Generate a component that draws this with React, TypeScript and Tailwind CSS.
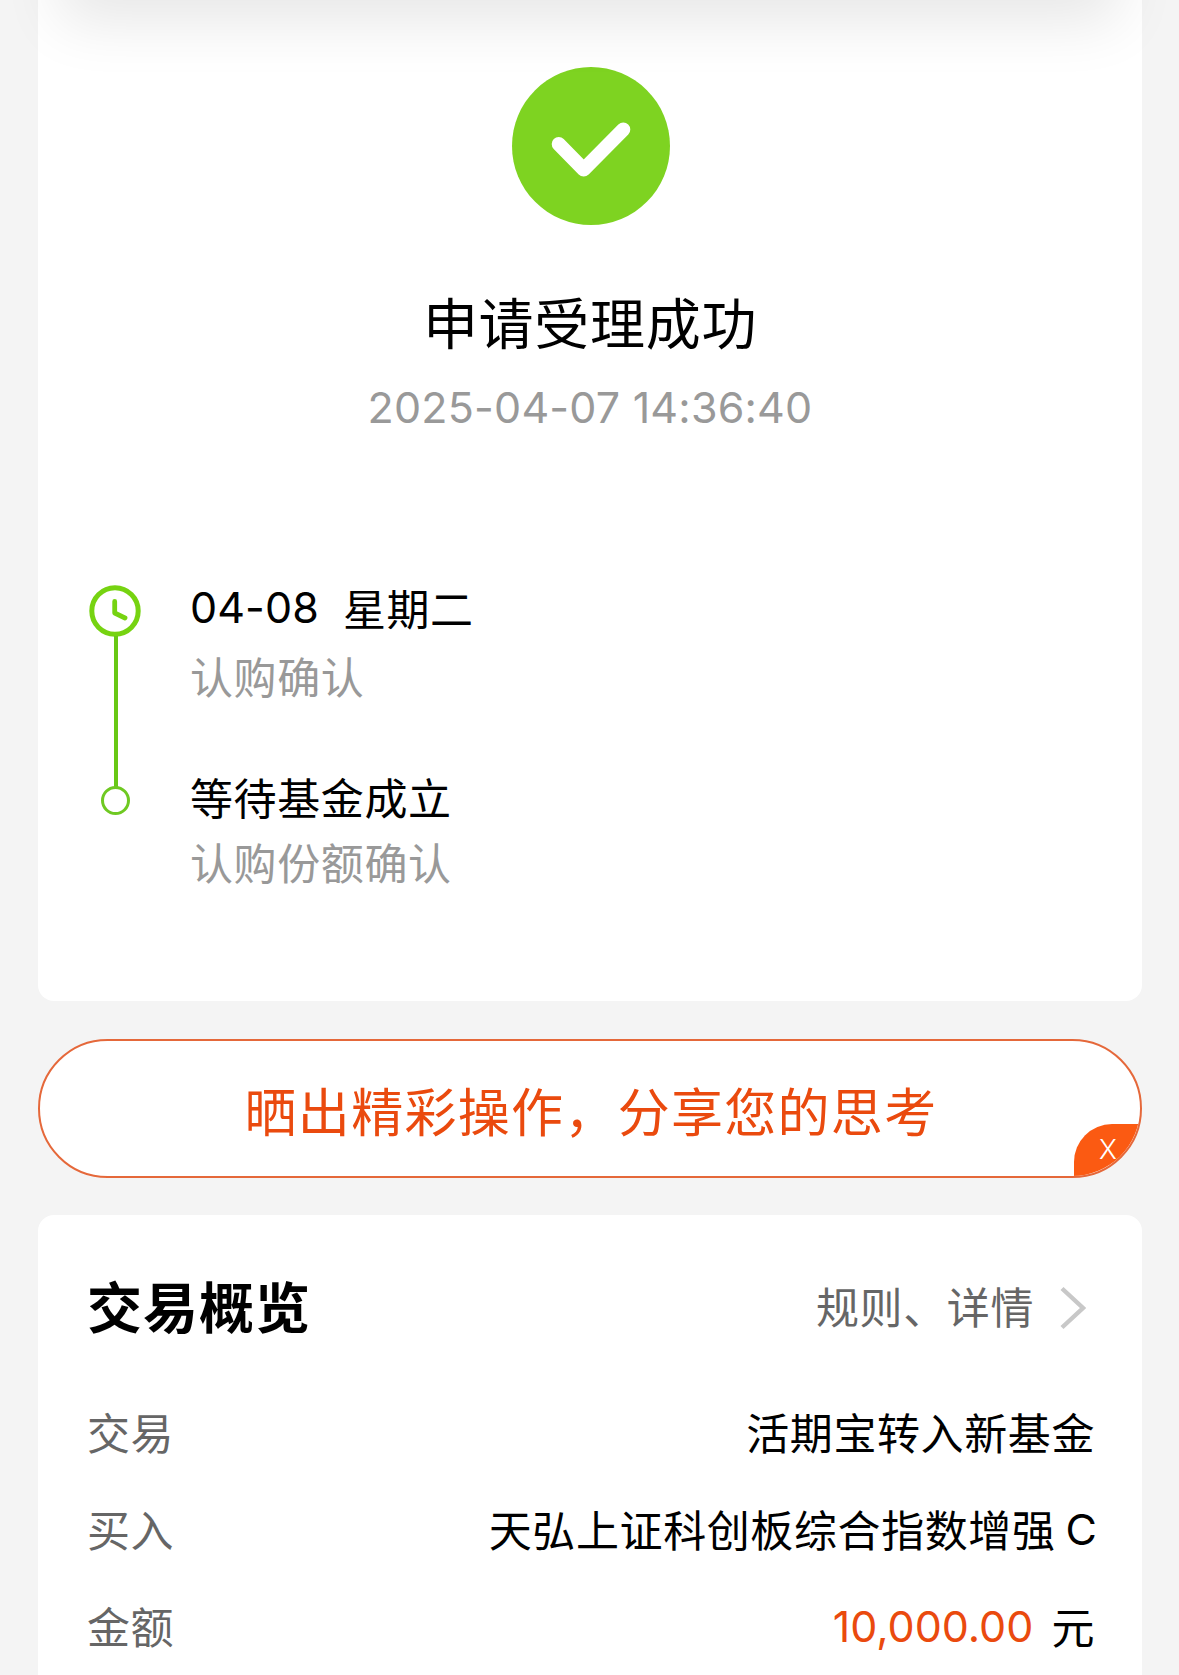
import type { ReactNode } from 'react';

function SuccessIcon() {
  return (
    <svg width="158" height="158" viewBox="0 0 158 158" fill="none" className="ml-[2px]">
      <circle cx="79" cy="79" r="79" fill="#7ed321" />
      <path d="M46.7 77 L71.7 102.5 L111.3 62.5" stroke="#fff" strokeWidth="14" strokeLinecap="round" strokeLinejoin="round" />
    </svg>
  );
}

function ClockIcon() {
  return (
    <svg width="52" height="52" viewBox="0 0 52 52" fill="none" className="mr-[2px] shrink-0">
      <circle cx="26" cy="26" r="23.2" stroke="#76d311" strokeWidth="5" />
      <path d="M25.7 16.5 V28 L36 33" stroke="#76d311" strokeWidth="4.8" strokeLinecap="round" strokeLinejoin="round" />
    </svg>
  );
}

function Chevron() {
  return (
    <svg width="26" height="44" viewBox="0 0 26 44" fill="none">
      <path d="M2 2.5 L23 22 L2 41.5" stroke="#c8c8c8" strokeWidth="4.4" />
    </svg>
  );
}

function Row({ label, children }: { label: string; children: ReactNode }) {
  return (
    <div className="flex h-[97px] items-center justify-between">
      <span className="text-[#666]">{label}</span>
      <span className="flex items-start text-black">{children}</span>
    </div>
  );
}

export default function App() {
  return (
    <div className="relative h-[1675px] w-full overflow-hidden bg-[#f4f4f4] px-[38px] font-['Inter','Noto_Sans_CJK_SC',sans-serif] text-[43px] leading-[60px] tracking-[0.6px]">
      {/* Shadow cast by the bar above */}
      <div className="pointer-events-none absolute -top-[100px] right-[60px] left-[60px] z-10 h-[100px] shadow-[0_22px_60px_rgba(0,0,0,0.098)]" />

      {/* Result */}
      <section className="h-[1001px] w-[1104px] rounded-b-[16px] bg-white px-[50px] pt-[67px]">
        <div className="flex flex-col items-center">
          <SuccessIcon />
          <h1 className="mt-[63px] text-[55px] leading-[72px] tracking-[0.7px] text-black">申请受理成功</h1>
          <p className="mt-[17px] tracking-[0.2px] text-[#999]">2025-04-07 14:36:40</p>
        </div>

        {/* Timeline */}
        <div className="mt-[140px] flex">
          <div className="mt-[8px] flex w-[55px] flex-col items-center">
            <ClockIcon />
            <div className="-mt-px h-[151px] w-1 bg-[#68c815]" />
            <div className="-mt-px size-[29px] rounded-full border-[3px] border-[#6fc922]" />
          </div>
          <div className="ml-[47px] pt-[3px]">
            <p className="flex h-[60px] items-start text-black">
              <span className="leading-[54px] tracking-[0.1px]">04-08</span>
              <span className="ml-[24px]">星期二</span>
            </p>
            <p className="mt-[8px] text-[#999]">认购确认</p>
            <p className="mt-[61px] text-black">等待基金成立</p>
            <p className="mt-[5px] text-[#999]">认购份额确认</p>
          </div>
        </div>
      </section>

      {/* Share button */}
      <div className="relative mt-[38px] flex h-[139px] w-[1104px] items-center justify-center overflow-hidden rounded-full border-2 border-[#e5683a] bg-white">
        <span className="mt-[11px] ml-[2px] text-[52px] tracking-[1.3px] text-[#ea4a0e]">晒出精彩操作，分享您的思考</span>
        <button className="absolute -right-[2px] -bottom-[2px] h-[54px] w-[68px] rounded-tl-[38px] bg-[#fb5a12] pb-[2px] text-[27px] leading-[50px] font-light tracking-normal text-white">
          X
        </button>
      </div>

      {/* Overview */}
      <section className="mt-[37px] h-[480px] w-[1104px] rounded-t-[16px] bg-white pt-[63px] pr-[47px] pl-[49px]">
        <div className="flex h-[60px] items-center justify-between">
          <h2 className="text-[55px] font-bold tracking-[1px] text-black">交易概览</h2>
          <div className="flex items-center gap-[26px] pr-[9px] text-[#666]">
            规则、详情
            <Chevron />
          </div>
        </div>
        <div className="mt-[47px]">
          <Row label="交易">活期宝转入新基金</Row>
          <Row label="买入">
            天弘上证科创板综合指数增强
            <span className="-mr-[2px] ml-[10px] leading-[57px] tracking-normal">C</span>
          </Row>
          <Row label="金额">
            <span className="leading-[56px] tracking-normal text-[#ea4a0e]">10,000.00</span>
            <span className="ml-[18px]">元</span>
          </Row>
        </div>
      </section>
    </div>
  );
}
